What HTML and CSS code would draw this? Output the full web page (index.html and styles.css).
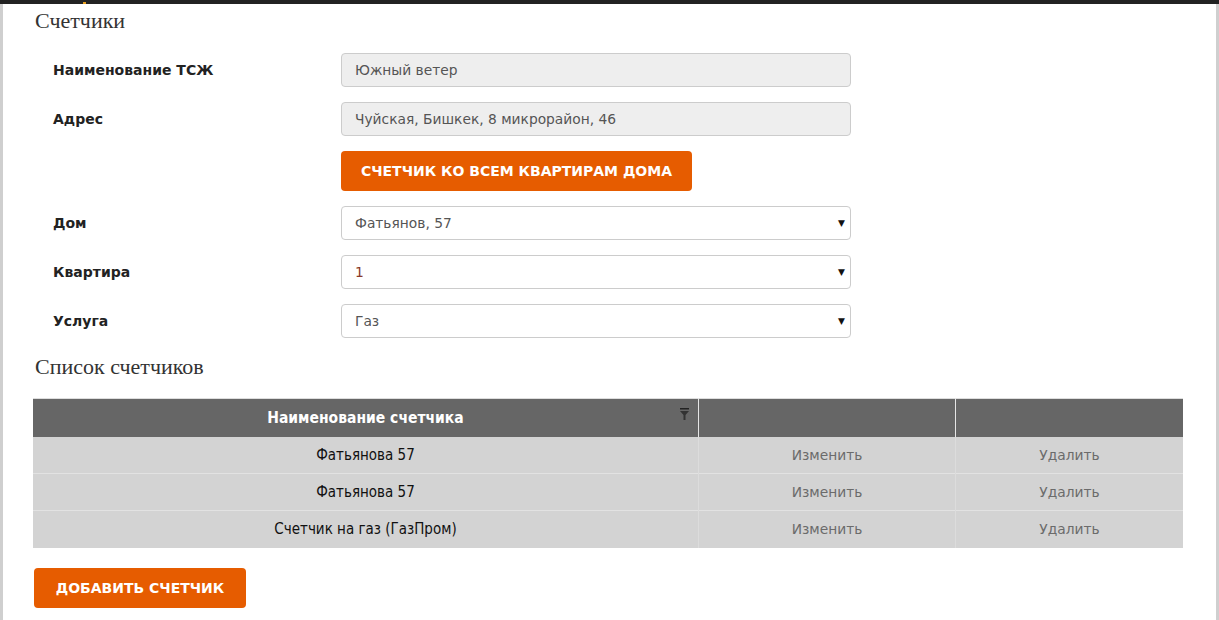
FILE: index.html
```html
<!DOCTYPE html>
<html lang="ru">
<head>
<meta charset="utf-8">
<title>Счетчики</title>
<link rel="stylesheet" href="styles.css">
</head>
<body>
<div class="topbar"><span class="topbar-dot"></span></div>
<div class="page">
  <h2 class="section-title">Счетчики</h2>
  <div class="form">
    <div class="form-row">
      <label class="form-label">Наименование ТСЖ</label>
      <div class="field field-readonly">Южный ветер</div>
    </div>
    <div class="form-row">
      <label class="form-label">Адрес</label>
      <div class="field field-readonly">Чуйская, Бишкек, 8 микрорайон, 46</div>
    </div>
    <div class="form-row">
      <span class="form-label"></span>
      <div><button class="btn btn-wide">Счетчик ко всем квартирам дома</button></div>
    </div>
    <div class="form-row">
      <label class="form-label">Дом</label>
      <div class="field field-select"><span>Фатьянов, 57</span><span class="caret">▼</span></div>
    </div>
    <div class="form-row">
      <label class="form-label">Квартира</label>
      <div class="field field-select"><span class="val-num">1</span><span class="caret">▼</span></div>
    </div>
    <div class="form-row">
      <label class="form-label">Услуга</label>
      <div class="field field-select"><span>Газ</span><span class="caret">▼</span></div>
    </div>
  </div>

  <h2 class="section-title list-title">Список счетчиков</h2>
  <table class="grid">
    <thead>
      <tr>
        <th class="col-name">Наименование счетчика
          <svg class="filter-icon" width="9" height="12" viewBox="0 0 9 12"><rect x="0" y="0" width="9" height="1.5" fill="#222"/><path d="M0 3 H9 L5.5 7 V12 H3.5 V7 Z" fill="#333"/></svg>
        </th>
        <th class="col-edit"></th>
        <th class="col-del"></th>
      </tr>
    </thead>
    <tbody>
      <tr><td>Фатьянова 57</td><td class="action">Изменить</td><td class="action">Удалить</td></tr>
      <tr><td>Фатьянова 57</td><td class="action">Изменить</td><td class="action">Удалить</td></tr>
      <tr><td>Счетчик на газ (ГазПром)</td><td class="action">Изменить</td><td class="action">Удалить</td></tr>
    </tbody>
  </table>

  <button class="btn btn-add">Добавить счетчик</button>
</div>
</body>
</html>
```

FILE: styles.css
```css
html, body {
  margin: 0;
  padding: 0;
  background: #fff;
}
body {
  font-family: "DejaVu Sans", Verdana, sans-serif;
  color: #333;
}
.topbar {
  height: 4px;
  background: #222;
  position: relative;
}
.topbar-dot {
  position: absolute;
  left: 83px;
  top: 2px;
  width: 3px;
  height: 2px;
  background: #e8a020;
}
.page {
  border-left: 3px solid #cfcfcf;
  border-right: 3px solid #cfcfcf;
  height: 616px;
  box-sizing: border-box;
  padding: 0 0 0 32px;
}
.section-title {
  font-family: "Liberation Serif", "Times New Roman", serif;
  font-weight: normal;
  font-size: 22px;
  color: #333;
  margin: 0;
  line-height: 24px;
  padding-top: 5px;
}
.form {
  padding: 20px 0 0 18px;
  display: flex;
  flex-direction: column;
  gap: 15px;
}
.form-row {
  display: grid;
  grid-template-columns: 288px 510px;
  align-items: center;
}
.form-label {
  font-weight: bold;
  font-size: 14px;
  color: #222;
}
.field {
  box-sizing: border-box;
  height: 34px;
  border: 1px solid #ccc;
  border-radius: 4px;
  padding: 0 12px 0 13px;
  font-size: 13.8px;
  color: #555;
  display: flex;
  align-items: center;
}
.field-readonly {
  background: #eee;
}
.field-select {
  background: #fff;
  justify-content: space-between;
  padding-right: 5px;
}
.val-num {
  color: #8a3a2a;
}
.caret {
  font-size: 9px;
  color: #111;
}
.btn {
  font-family: "DejaVu Sans", Verdana, sans-serif;
  background: #e65c00;
  color: #fff;
  border: none;
  border-radius: 4px;
  height: 40px;
  font-weight: bold;
  font-size: 14px;
  text-transform: uppercase;
  cursor: pointer;
  padding: 0;
}
.btn-wide {
  width: 351px;
}
.list-title {
  padding-top: 17px;
}
.grid {
  margin-top: 19px;
  margin-left: -2px;
  width: 1150px;
  border-collapse: collapse;
  font-family: "DejaVu Sans Condensed", Tahoma, sans-serif;
  font-size: 15px;
}
.grid thead tr {
  background: #666;
  height: 38px;
  border-top: 1px solid #ddd;
}
.grid th {
  color: #fff;
  font-weight: bold;
  font-size: 15.5px;
  position: relative;
  padding: 0;
}
.grid th + th {
  border-left: 1px solid #e6e6e6;
}
.col-name { width: 665px; }
.col-edit { width: 256px; }
.filter-icon {
  position: absolute;
  right: 9px;
  top: 9px;
}
.grid tbody tr {
  background: #d3d3d3;
  height: 37px;
}
.grid tbody tr + tr {
  border-top: 1px solid #e2e2e2;
}
.grid td {
  text-align: center;
  color: #111;
  padding: 0;
}
.grid td + td {
  border-left: 1px solid #dcdcdc;
}
.grid td.action {
  font-family: "DejaVu Sans", Verdana, sans-serif;
  font-size: 13.8px;
  color: #6b6b6b;
}
.btn-add {
  margin-top: 20px;
  margin-left: -1px;
  width: 212px;
}
```
